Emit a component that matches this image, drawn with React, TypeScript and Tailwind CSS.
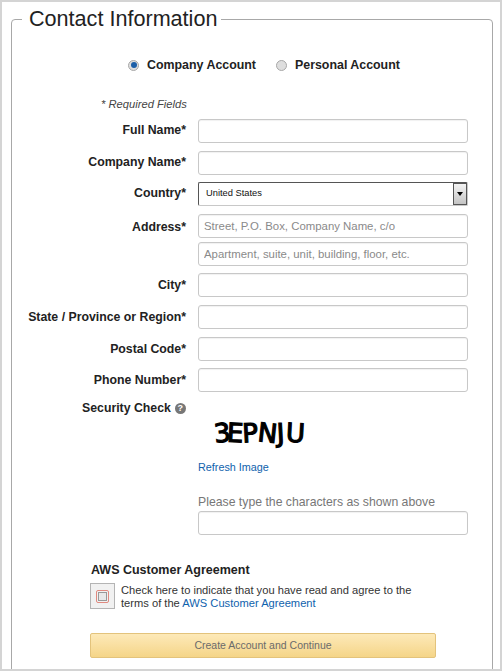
const inputClass =
  "block h-[24px] w-[270px] rounded-[3px] border border-[#c8c8c8] bg-white px-[5px] text-[11.4px] text-[#333] shadow-[inset_0_1px_1px_rgba(0,0,0,0.06)] placeholder:text-[#8a8a8a]";

function Row({
  label,
  className,
  labelClass = "pt-[3px]",
  children,
}: {
  label: string;
  className: string;
  labelClass?: string;
  children: React.ReactNode;
}) {
  return (
    <div className={`flex items-start ${className}`}>
      <label
        className={`mr-[12px] w-[174px] text-right text-[12.3px] leading-[16px] font-bold whitespace-nowrap text-[#222] ${labelClass}`}
      >
        {label}
      </label>
      {children}
    </div>
  );
}

function Radio({ checked, label }: { checked?: boolean; label: string }) {
  return (
    <label className="flex items-center gap-[8px] text-[12.4px] leading-[16px] font-bold text-[#222]">
      <span className="flex h-[11px] w-[11px] items-center justify-center rounded-full border border-[#a8a8a8] bg-[#dedede]">
        {checked && <span className="h-[6px] w-[6px] rounded-full bg-[#1c5fa8]" />}
      </span>
      {label}
    </label>
  );
}

function Captcha() {
  const letters = [
    { c: "3", cls: "w-[13px] -rotate-6" },
    { c: "E", cls: "w-[15px] rotate-3" },
    { c: "P", cls: "w-[16px] -rotate-3" },
    { c: "N", cls: "w-[17px] rotate-6" },
    { c: "J", cls: "w-[11px] -rotate-3" },
    { c: "U", cls: "w-[17px] rotate-3" },
  ];
  return (
    <div className="mt-[19px] ml-[16px] flex h-[30px] items-center text-[26px] leading-[30px] text-black [-webkit-text-stroke:1.2px_black] [font-family:'DejaVu_Sans',sans-serif]">
      {letters.map((l, i) => (
        <span key={i} className={`inline-block text-center ${l.cls}`}>
          {l.c}
        </span>
      ))}
    </div>
  );
}

export default function App() {
  return (
    <div className="h-[671px] w-[502px] overflow-hidden border-2 border-[#d4d4d4] bg-white font-['Liberation_Sans',Arial,sans-serif]">
      <fieldset className="mt-[4px] ml-[9px] h-[700px] w-[482px] rounded-[4px] border border-[#a8a8a8] pl-0">
        <legend className="ml-[10px] pr-[4px] pl-[7px] text-[21.6px] leading-[26px] text-[#222]">
          Contact Information
        </legend>

        <div className="mt-[25px] ml-[116px] flex gap-[20px]">
          <Radio checked label="Company Account" />
          <Radio label="Personal Account" />
        </div>

        <p className="mt-[24px] ml-[89px] text-[11.2px] leading-[14px] text-[#444] italic">* Required Fields</p>

        <Row label="Full Name*" className="mt-[8px]">
          <input className={inputClass} />
        </Row>
        <Row label="Company Name*" className="mt-[8px]">
          <input className={inputClass} />
        </Row>
        <Row label="Country*" className="mt-[7px]">
          <div className="flex h-[24px] w-[270px] items-center justify-between rounded-[2px] border border-[#c8c8c8] border-t-[#555] border-l-[#555] bg-white pl-[7px] text-[9.3px] text-[#111]">
            United States
            <span className="flex h-[22px] w-[14px] items-center justify-center border border-[#555] bg-gradient-to-b from-[#f4f4f4] to-[#c4c4c4]">
              <span className="h-0 w-0 border-x-[3px] border-t-[4px] border-x-transparent border-t-black" />
            </span>
          </div>
        </Row>
        <Row label="Address*" labelClass="pt-[5px]" className="mt-[8px]">
          <div className="flex flex-col gap-[4px]">
            <input className={inputClass} placeholder="Street, P.O. Box, Company Name, c/o" />
            <input className={inputClass} placeholder="Apartment, suite, unit, building, floor, etc." />
          </div>
        </Row>
        <Row label="City*" labelClass="pt-[4px]" className="mt-[7px]">
          <input className={inputClass} />
        </Row>
        <Row label="State / Province or Region*" labelClass="pt-[4px]" className="mt-[8px]">
          <input className={inputClass} />
        </Row>
        <Row label="Postal Code*" labelClass="pt-[4px]" className="mt-[8px]">
          <input className={inputClass} />
        </Row>
        <Row label="Phone Number*" labelClass="pt-[4px]" className="mt-[7px]">
          <input className={inputClass} />
        </Row>

        <div className="mt-[7px] flex items-start">
          <div className="mt-[1px] ml-[70px] flex w-[104px] items-center gap-[4px] text-[12.3px] leading-[16px] font-bold whitespace-nowrap text-[#222]">
            Security Check
            <span className="flex h-[11px] w-[11px] shrink-0 items-center justify-center rounded-full bg-[#777] text-[9px] leading-none font-bold text-white">
              ?
            </span>
          </div>
          <div className="ml-[12px] w-[270px]">
            <Captcha />
            <a className="mt-[12px] block text-[10.8px] leading-[14px] text-[#0f62ad]" href="#">
              Refresh Image
            </a>
            <p className="mt-[21px] text-[12.25px] leading-[14px] text-[#777]">
              Please type the characters as shown above
            </p>
            <input className={`${inputClass} mt-[2px]`} />
          </div>
        </div>

        <div className="mt-[27px] ml-[78px] w-[346px]">
          <h3 className="pl-[1px] text-[12.5px] leading-[16px] font-bold text-[#222]">AWS Customer Agreement</h3>
          <div className="mt-[5px] flex items-start">
            <span className="flex h-[26px] w-[25px] shrink-0 items-center justify-center border border-[#b4b4b4] bg-[#f1f1f1]">
              <span className="flex h-[13px] w-[13px] items-center justify-center rounded-[2px] border border-[#e08a80]">
                <span className="h-[9px] w-[9px] border border-[#999] bg-[#e8e8e8]" />
              </span>
            </span>
            <p className="mt-[1px] ml-[6px] w-[300px] text-[11.15px] leading-[13px] text-[#333]">
              Check here to indicate that you have read and agree to the terms of the{" "}
              <a className="text-[#0f62ad]" href="#">
                AWS Customer Agreement
              </a>
            </p>
          </div>
          <button className="mt-[23px] block h-[25px] w-[346px] rounded-[2px] border border-[#e3c37c] bg-gradient-to-b from-[#fde9b8] to-[#f5d588] text-[10.5px] text-[#6b6b6b]">
            Create Account and Continue
          </button>
        </div>
      </fieldset>
    </div>
  );
}
